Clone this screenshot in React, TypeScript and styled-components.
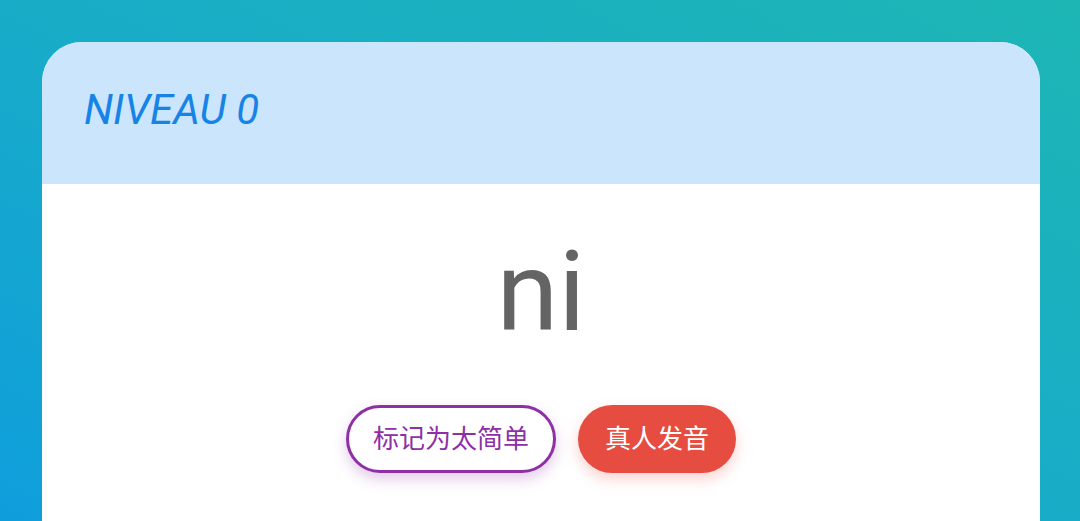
import React from "react";
import styled, { createGlobalStyle } from "styled-components";

const Global = createGlobalStyle`
  html, body { margin: 0; padding: 0; }
  body {
    font-family: Roboto, "Noto Sans CJK SC", sans-serif;
    overflow: hidden;
  }
`;

const Page = styled.div`
  width: 1080px;
  height: 521px;
  box-sizing: border-box;
  padding: 42px 40px 0 42px;
  background: linear-gradient(to top right, #0f9edc 0%, #18acc8 50%, #1db6b4 100%);
  overflow: hidden;
`;

const Card = styled.div`
  background: #ffffff;
  border-radius: 40px 40px 0 0;
  overflow: hidden;
  height: 520px;
`;

const Header = styled.div`
  height: 142px;
  background: #cbe5fd;
  display: flex;
  align-items: center;
  padding-left: 42px;
  padding-bottom: 7px;
  box-sizing: border-box;
`;

const Level = styled.h2`
  margin: 0;
  font-family: Roboto, sans-serif;
  font-style: italic;
  font-weight: 400;
  font-size: 42px;
  color: #1683e6;
`;

const Body = styled.div`
  display: flex;
  flex-direction: column;
  align-items: center;
`;

const Word = styled.div`
  font-family: Roboto, sans-serif;
  font-size: 112px;
  line-height: 1;
  color: #646464;
  margin-top: 52px;
`;

const Actions = styled.div`
  display: flex;
  gap: 22px;
  margin-top: 57px;
`;

const Pill = styled.button<{ $variant: "outline" | "solid" }>`
  height: 68px;
  border-radius: 34px;
  box-sizing: border-box;
  padding: 0 ${(p) => (p.$variant === "outline" ? "24px" : "27px")} 5px;
  font-family: "Noto Sans CJK SC", Roboto, sans-serif;
  font-size: 26px;
  line-height: 1;
  cursor: pointer;
  display: flex;
  align-items: center;
  justify-content: center;
  border: ${(p) => (p.$variant === "outline" ? "3px solid #8e2fa6" : "none")};
  background: ${(p) => (p.$variant === "outline" ? "#ffffff" : "#e74c41")};
  color: ${(p) => (p.$variant === "outline" ? "#8e2fa6" : "#ffffff")};
  box-shadow: ${(p) =>
    p.$variant === "outline"
      ? "0 6px 14px rgba(142, 47, 166, 0.25)"
      : "0 6px 14px rgba(231, 76, 65, 0.25)"};
`;

export default function App() {
  return (
    <>
      <Global />
      <Page>
        <Card>
          <Header>
            <Level>NIVEAU 0</Level>
          </Header>
          <Body>
            <Word>ni</Word>
            <Actions>
              <Pill $variant="outline">标记为太简单</Pill>
              <Pill $variant="solid">真人发音</Pill>
            </Actions>
          </Body>
        </Card>
      </Page>
    </>
  );
}
